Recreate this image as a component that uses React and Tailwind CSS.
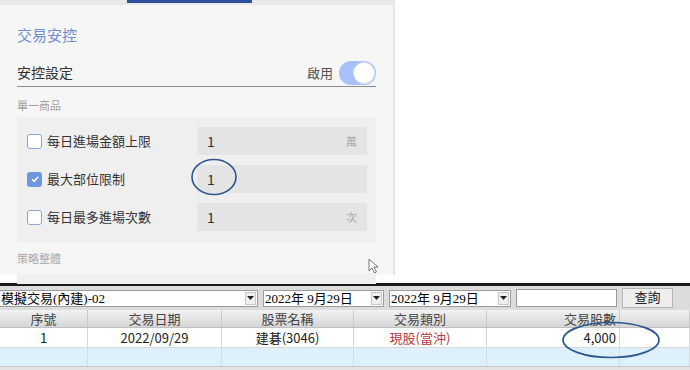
import React from "react";

const cjk = { fontFamily: '"Noto Sans CJK TC", "Noto Sans", sans-serif' };
const win = { fontFamily: '"Liberation Serif", "Noto Sans CJK TC", serif' };

const Checkbox = ({ checked }) =>
  checked ? (
    <span className="w-[15px] h-[15px] rounded-[3px] bg-[#6f96e0] flex items-center justify-center shrink-0">
      <svg width="10" height="10" viewBox="0 0 10 10">
        <path d="M2 5.2 L4.2 7.3 L8.2 2.8" fill="none" stroke="white" strokeWidth="1.5" />
      </svg>
    </span>
  ) : (
    <span className="w-[15px] h-[15px] rounded-[3px] border-[1.5px] border-[#8aa6dc] bg-white shrink-0" />
  );

const LimitRow = ({ label, checked, unit }) => (
  <div className="flex items-center h-[28px]">
    <div className="flex items-center gap-[5px] w-[170px]">
      <Checkbox checked={checked} />
      <span className="text-[13px] text-[#333]">{label}</span>
    </div>
    <div className="flex items-center justify-between w-[170px] h-[28px] bg-[#e4e4e4] px-[10px]">
      <span className="text-[14px] text-[#333]">1</span>
      <span className="text-[11px] text-[#aaa]">{unit}</span>
    </div>
  </div>
);

const Combo = ({ text, width }) => (
  <div className={`flex items-center h-[17px] bg-white border border-[#9c9c9c] ${width}`} style={win}>
    <span className="flex-1 text-[13px] leading-none text-black pl-[1px] whitespace-nowrap">{text}</span>
    <span className="w-[11px] h-[13px] mr-[1px] bg-[#f0f0f0] border border-[#c8c8c8] flex items-center justify-center">
      <svg width="7" height="4" viewBox="0 0 7 4">
        <path d="M0 0 H7 L3.5 4 Z" fill="#222" />
      </svg>
    </span>
  </div>
);

const cols = [
  { w: "w-[88px]", head: "序號", val: "1", align: "justify-center" },
  { w: "w-[134px]", head: "交易日期", val: "2022/09/29", align: "justify-center" },
  { w: "w-[132px]", head: "股票名稱", val: "建碁(3046)", align: "justify-center" },
  { w: "w-[133px]", head: "交易類別", val: "現股(當沖)", align: "justify-center", red: true },
  { w: "w-[133px]", head: "交易股數", val: "4,000", align: "justify-end pr-[3px]" },
  { w: "flex-1", head: "", val: "", align: "" },
];

export default function App() {
  return (
    <div className="w-[690px] h-[370px] bg-white overflow-hidden relative" style={cjk}>
      {/* top: settings panel */}
      <div className="h-[283px]">
        <div className="w-[395px] h-[5px] bg-[#e9e9e9]">
          <div className="ml-[127px] w-[125px] h-[3px] bg-[#2c4f9e]" />
        </div>
        <div className="w-[395px] h-[270px] bg-[#f6f6f7] border-r-[2px] border-[#e6e6e6] pl-[17px] pr-[17px] relative">
          <div className="pt-[20px] text-[15px] leading-[20px] text-[#6d8fd8]">交易安控</div>
          <div className="mt-[16px] h-[26px] flex items-center justify-between border-b border-[#8a8a8a] pb-[2px]">
            <span className="text-[14px] text-[#333]">安控設定</span>
            <div className="flex items-center gap-[6px]">
              <span className="text-[13px] text-[#555]">啟用</span>
              <div className="w-[37px] h-[24px] rounded-full bg-[#a6c2f8] flex items-center justify-end pr-[1px]">
                <span className="w-[22px] h-[22px] rounded-full bg-white border border-[#dfe6f5]" />
              </div>
            </div>
          </div>
          <div className="mt-[10px] text-[11px] leading-[16px] text-[#a0a0a0]">單一商品</div>
          <div className="mt-[4px] bg-[#efefef] pl-[10px] pt-[10px] pb-[11px] flex flex-col gap-[10px]">
            <LimitRow label="每日進場金額上限" unit="萬" />
            <LimitRow label="最大部位限制" checked unit="" />
            <LimitRow label="每日最多進場次數" unit="次" />
          </div>
          <div className="mt-[8px] text-[11px] leading-[16px] text-[#a8a8a8]">策略整體</div>
          <div className="mt-[8px] h-[10px] bg-[#f0f0f1]" />
          <svg className="absolute left-[368px] top-[253px]" width="12" height="16" viewBox="0 0 12 16">
            <path d="M1 1 V13 L4 10 L6.5 15 L8.5 14 L6 9 H10 Z" fill="white" stroke="#777" strokeWidth="1" />
          </svg>
          <svg className="absolute left-[190px] top-[153px]" width="48" height="38" viewBox="0 0 48 38">
            <ellipse cx="24" cy="19" rx="22" ry="17.5" fill="none" stroke="#2b5690" strokeWidth="1.6" />
          </svg>
        </div>
      </div>

      {/* bottom: windows grid */}
      <div className="h-[3px] bg-[#1a1a1a]" />
      <div className="h-[24px] bg-[#dcdcdc] flex items-center gap-[5px] pl-0">
        <Combo text="模擬交易(內建)-02" width="w-[259px] -ml-[1px]" />
        <Combo text="2022年 9月29日" width="w-[121px]" />
        <Combo text="2022年 9月29日" width="w-[122px]" />
        <div className="w-[101px] h-[18px] bg-white border border-[#9c9c9c]" />
        <div className="w-[51px] h-[20px] bg-[#eeeeee] border border-[#b5b5b5] flex items-center justify-center text-[13px] text-[#222]" style={win}>
          查詢
        </div>
      </div>
      <div className="h-[18px] flex bg-gradient-to-b from-[#f2f2f2] to-[#d6d6d6] border-b border-[#c0c0c0]">
        {cols.map((c, i) => (
          <div key={i} className={`${c.w} flex items-center ${c.align} border-r border-[#c8c8c8] text-[13px] text-[#444]`}>
            {c.head}
          </div>
        ))}
      </div>
      <div className="h-[20px] flex bg-white border-b border-[#d8d8d8]">
        {cols.map((c, i) => (
          <div key={i} className={`${c.w} flex items-center ${c.align} border-r border-[#d6d6d6] text-[13px] ${c.red ? "text-[#b83a3a]" : "text-[#222]"}`}>
            {c.val}
          </div>
        ))}
      </div>
      <div className="h-[19px] flex bg-[#ddf0fb] border-b border-[#c8c8c8]">
        {cols.map((c, i) => (
          <div key={i} className={`${c.w} border-r border-[#cfdde6]`} />
        ))}
      </div>
      <div className="h-[10px] bg-[#e4e4e4]" />
      <svg className="absolute left-[560px] top-[320px]" width="102" height="40" viewBox="0 0 102 40">
        <ellipse cx="51" cy="20" rx="48" ry="17.5" fill="none" stroke="#2b5690" strokeWidth="1.6" />
      </svg>
    </div>
  );
}
